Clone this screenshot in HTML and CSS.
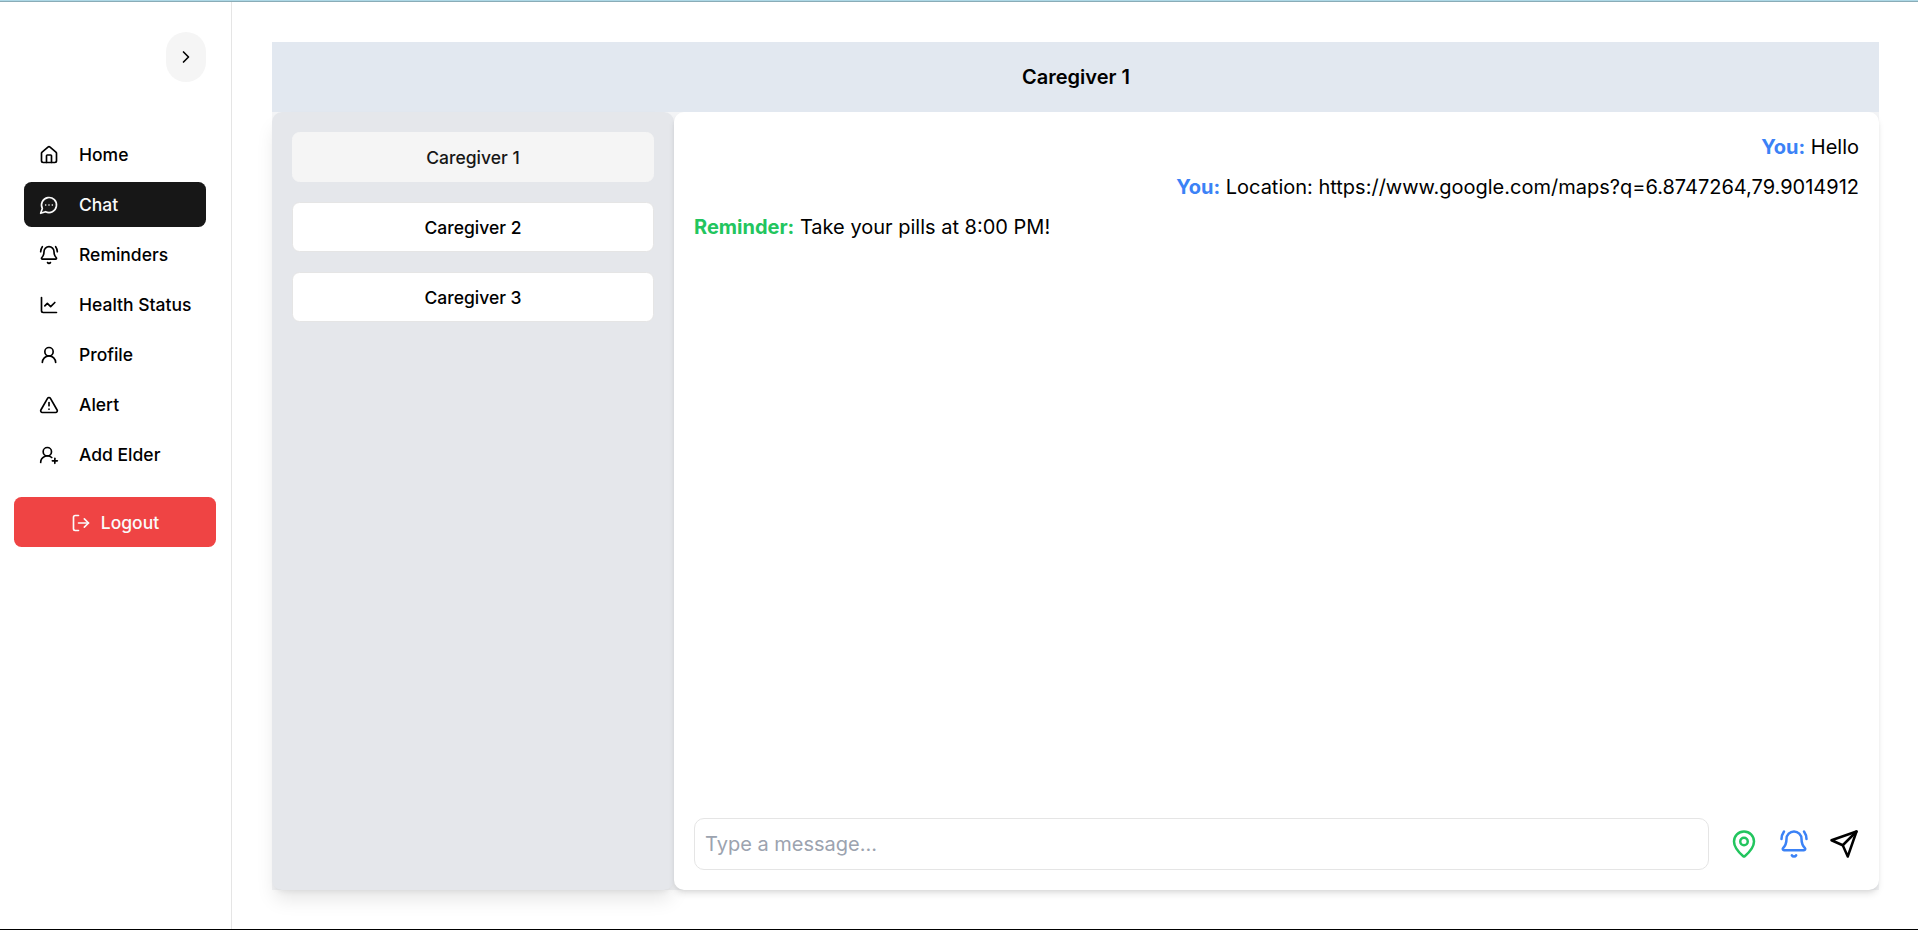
FILE: index.html
```html
<!DOCTYPE html>
<html lang="en">
<head>
<meta charset="utf-8">
<title>Chat</title>
<link rel="stylesheet" href="styles.css">
</head>
<body>
<div class="app">
  <aside class="sidebar">
    <button class="toggle" aria-label="Expand">
      <svg class="icon" viewBox="0 0 24 24"><path d="m9 18 6-6-6-6"/></svg>
    </button>
    <nav class="nav">
      <a class="nav-item"><svg class="icon" viewBox="0 0 24 24"><path d="M15 21v-8a1 1 0 0 0-1-1h-4a1 1 0 0 0-1 1v8"/><path d="M3 10a2 2 0 0 1 .709-1.528l7-5.999a2 2 0 0 1 2.582 0l7 5.999A2 2 0 0 1 21 10v9a2 2 0 0 1-2 2H5a2 2 0 0 1-2-2z"/></svg><span>Home</span></a>
      <a class="nav-item active"><svg class="icon" viewBox="0 0 24 24"><path d="M7.9 20A9 9 0 1 0 4 16.1L2 22Z"/><path d="M8 12h.01M12 12h.01M16 12h.01"/></svg><span>Chat</span></a>
      <a class="nav-item"><svg class="icon" viewBox="0 0 24 24"><path d="M10.268 21a2 2 0 0 0 3.464 0"/><path d="M22 8c0-2.3-.8-4.3-2-6"/><path d="M3.262 15.326A1 1 0 0 0 4 17h16a1 1 0 0 0 .74-1.673C19.41 13.956 18 12.499 18 8A6 6 0 0 0 6 8c0 4.499-1.411 5.956-2.738 7.326"/><path d="M4 2C2.8 3.7 2 5.7 2 8"/></svg><span>Reminders</span></a>
      <a class="nav-item"><svg class="icon" viewBox="0 0 24 24"><path d="M3 3v16a2 2 0 0 0 2 2h16"/><path d="m19 9-5 5-4-4-3 3"/></svg><span>Health Status</span></a>
      <a class="nav-item"><svg class="icon" viewBox="0 0 24 24"><circle cx="12" cy="8" r="5"/><path d="M20 21a8 8 0 0 0-16 0"/></svg><span>Profile</span></a>
      <a class="nav-item"><svg class="icon" viewBox="0 0 24 24"><path d="m21.73 18-8-14a2 2 0 0 0-3.48 0l-8 14A2 2 0 0 0 4 21h16a2 2 0 0 0 1.73-3"/><path d="M12 9v4"/><path d="M12 17h.01"/></svg><span>Alert</span></a>
      <a class="nav-item"><svg class="icon" viewBox="0 0 24 24"><path d="M2 21a8 8 0 0 1 13.292-6"/><circle cx="10" cy="8" r="5"/><path d="M19 16v6"/><path d="M22 19h-6"/></svg><span>Add Elder</span></a>
    </nav>
    <button class="logout">
      <svg class="icon" viewBox="0 0 24 24"><path d="M9 21H5a2 2 0 0 1-2-2V5a2 2 0 0 1 2-2h4"/><path d="m16 17 5-5-5-5"/><path d="M21 12H9"/></svg>
      <span>Logout</span>
    </button>
  </aside>
  <main class="main">
    <header class="header">Caregiver 1</header>
    <div class="body">
      <section class="contacts">
        <button class="contact selected">Caregiver 1</button>
        <button class="contact">Caregiver 2</button>
        <button class="contact">Caregiver 3</button>
      </section>
      <section class="chat">
        <div class="messages">
          <div class="message own"><b>You:</b> Hello</div>
          <div class="message own"><b>You:</b> Location: https://www.google.com/maps?q=6.8747264,79.9014912</div>
          <div class="message reminder"><b>Reminder:</b> Take your pills at 8:00 PM!</div>
        </div>
        <div class="composer">
          <input class="input" type="text" placeholder="Type a message...">
          <svg class="icon large green" viewBox="0 0 24 24"><path d="M20 10c0 4.993-5.539 10.193-7.399 11.799a1 1 0 0 1-1.202 0C9.539 20.193 4 14.993 4 10a8 8 0 0 1 16 0"/><circle cx="12" cy="10" r="3"/></svg>
          <svg class="icon large blue" viewBox="0 0 24 24"><path d="M10.268 21a2 2 0 0 0 3.464 0"/><path d="M22 8c0-2.3-.8-4.3-2-6"/><path d="M3.262 15.326A1 1 0 0 0 4 17h16a1 1 0 0 0 .74-1.673C19.41 13.956 18 12.499 18 8A6 6 0 0 0 6 8c0 4.499-1.411 5.956-2.738 7.326"/><path d="M4 2C2.8 3.7 2 5.7 2 8"/></svg>
          <svg class="icon large" viewBox="0 0 24 24"><path d="m22 2-7 20-4-9-9-4Z"/><path d="M22 2 11 13"/></svg>
        </div>
      </section>
    </div>
  </main>
</div>
</body>
</html>
```
FILE: styles.css
```css
* { box-sizing: border-box; }
body {
  margin: 0;
  border-top: 1px solid #add8e6;
  font-family: Inter, sans-serif;
  font-size: 20px;
  line-height: 30px;
  color: #000;
  background: #fff;
}
button { font: inherit; border: 0; padding: 0; color: inherit; }
.app {
  display: flex;
  height: 929px;
  border-top: 1px solid #8aacb7;
  border-bottom: 1px solid #000;
  overflow: hidden;
}
.icon {
  width: 20px;
  height: 20px;
  flex: none;
  fill: none;
  stroke: currentColor;
  stroke-width: 2;
  stroke-linecap: round;
  stroke-linejoin: round;
}
.sidebar {
  width: 232px;
  flex: none;
  display: flex;
  flex-direction: column;
  border-right: 1px solid #e5e5e5;
  padding: 30px 15px 0 14px;
  font-size: 17.5px;
  font-weight: 500;
}
.toggle {
  align-self: flex-end;
  display: flex;
  align-items: center;
  justify-content: center;
  width: 40px;
  height: 50px;
  margin-right: 10px;
  border-radius: 20px;
  background: #f5f5f5;
}
.nav {
  display: flex;
  flex-direction: column;
  gap: 5px;
  margin: 50px 10px 0;
}
.nav-item {
  display: flex;
  align-items: center;
  gap: 20px;
  height: 45px;
  padding-left: 15px;
  border-radius: 7.5px;
}
.active { background: #171717; color: #fafafa; }
.logout {
  display: flex;
  align-items: center;
  justify-content: center;
  gap: 10px;
  height: 50px;
  margin-top: 20px;
  padding-top: 1px;
  border-radius: 7.5px;
  background: #ef4444;
  color: #fafafa;
}
.main {
  flex: 1;
  display: flex;
  flex-direction: column;
  padding: 40px 39px 39px 40px;
}
.header {
  height: 70px;
  flex: none;
  padding-left: 1px;
  background: #e2e8f0;
  text-align: center;
  font-weight: 600;
  line-height: 70px;
}
.body { flex: 1; display: flex; background: #f3f4f6; }
.contacts {
  width: 402px;
  flex: none;
  display: flex;
  flex-direction: column;
  gap: 20px;
  padding: 20px;
  border-radius: 10px;
  background: #e5e7eb;
  box-shadow: 0 12.5px 18.75px -3.75px rgba(0,0,0,.1), 0 5px 7.5px -5px rgba(0,0,0,.1);
}
.contact {
  height: 50px;
  padding-top: 2px;
  border: 1px solid #e5e5e5;
  border-radius: 7.5px;
  background: #fff;
  font-size: 17.5px;
  font-weight: 500;
}
.selected { background: #f5f5f5; border-color: #f5f5f5; color: #171717; }
.chat {
  flex: 1;
  display: flex;
  flex-direction: column;
  padding: 20px;
  border-radius: 10px;
  background: #fff;
  box-shadow: 0 5px 7.5px -1.25px rgba(0,0,0,.1), 0 2.5px 5px -2.5px rgba(0,0,0,.1);
}
.messages { flex: 1; display: flex; flex-direction: column; gap: 10px; }
.own { text-align: right; }
.message b { font-weight: 700; }
.own b { color: #3b82f6; }
.reminder b { color: #22c55e; }
.composer { display: flex; align-items: center; gap: 20px; }
.input {
  flex: 1;
  height: 52px;
  padding: 0 10px;
  border: 1px solid #e5e5e5;
  border-radius: 10px;
  font: inherit;
}
.input::placeholder { color: #9ca3af; }
.large { width: 30px; height: 30px; }
.green { color: #22c55e; }
.blue { color: #3b82f6; }
```
